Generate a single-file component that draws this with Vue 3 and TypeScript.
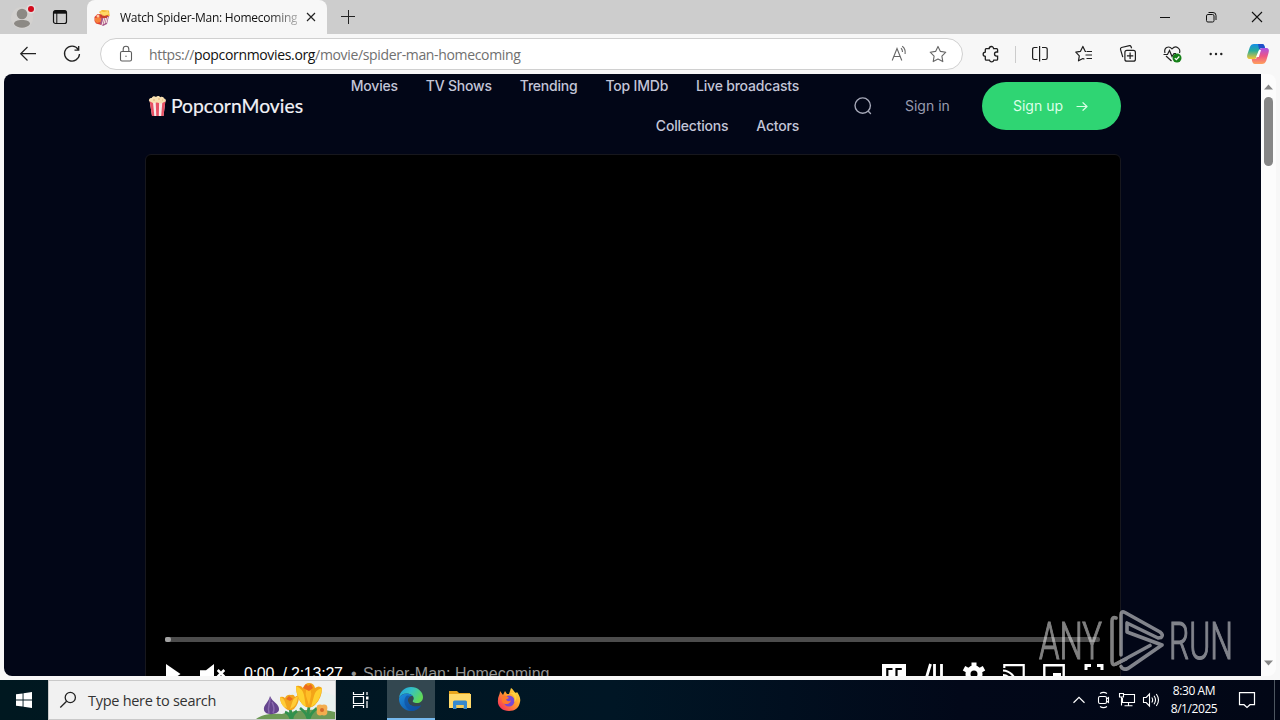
<script setup lang="ts">
const navRows: string[][] = [
  ['Movies', 'TV Shows', 'Trending', 'Top IMDb', 'Live broadcasts'],
  ['Collections', 'Actors'],
]
</script>

<template>
  <div class="desktop">
    <header class="tabbar">
      <div class="profile">
        <svg width="30" height="34" viewBox="0 0 30 34">
          <circle cx="14" cy="18" r="11" fill="#d3d1cf" />
          <circle cx="14" cy="14" r="5.3" fill="#8c8984" />
          <path d="M6 24c0-2.600 3.400-3.900 8-3.900s8 1.300 8 3.900c-1.700 2.600-4.800 3.700-8 3.700S7.700 26.600 6 24z" fill="#8c8984" />
          <circle cx="23" cy="9" r="4.500" fill="#e4dcdc" />
          <circle cx="23" cy="9" r="3" fill="#d20a1b" />
        </svg>
      </div>
      <svg class="workspaces" width="16" height="16" viewBox="0 0 16 16" fill="none" stroke="#111">
        <rect x="1.500" y="1.500" width="13" height="13" rx="2" stroke-width="1.200" />
        <path d="M2 3.200h12" stroke-width="3" />
        <path d="M4.800 4v10.500" />
      </svg>
      <div class="tab">
        <svg width="16" height="17" viewBox="0 0 16 17">
          <path d="M5 3l3-2 7 .5.700 5.500-3 2-5-3z" fill="#f5b52d" />
          <path d="M6 2l4 1 4-1 1 3-4 2-4-2z" fill="#ffd866" />
          <path d="M.5 8l3-3 4 .5 2 4.500-2 6-5.500-1.500L.5 12z" fill="#e0402f" />
          <path d="M1 9l4-1 3 2-1 3-4 1-2-2z" fill="#f6813b" />
          <path d="M8 7l7 0-2 8-4 2-3-2z" fill="#a8588c" />
          <path d="M9 8l1 1-2 7M12 8l-2 7M13.500 8l-1.500 6" stroke="#fff1e4" fill="none" />
          <path d="M5 5l5 2 4-1-1 3-5 0z" fill="#c83f2d" />
          <circle cx="4" cy="7" r="1.500" fill="#ffc9a1" />
        </svg>
        <span class="tab-title">Watch Spider-Man: Homecoming</span>
        <svg width="10" height="10" viewBox="0 0 10 10" stroke="#222" stroke-width="1.150"><path d="M1 1l8 8M9 1L1 9" /></svg>
      </div>
      <svg class="newtab" width="14" height="14" viewBox="0 0 14 14" stroke="#222"><path d="M0 6.500h14M7.500 0v14" /></svg>
      <div class="window-buttons">
        <svg width="12" height="12" viewBox="0 0 12 12" stroke="#111" fill="none"><path d="M1 6.500h10" /></svg>
        <svg width="12" height="12" viewBox="0 0 12 12" stroke="#111" fill="none"><rect x="1.500" y="3.500" width="7.500" height="7.500" rx="1.400" /><path d="M3.500 1.500h4.500a3 3 0 0 1 3 3V9" /></svg>
        <svg width="12" height="12" viewBox="0 0 12 12" stroke="#111" fill="none"><path d="M1 1l10 10M11 1L1 11" stroke-width="1.100" /></svg>
      </div>
    </header>

    <div class="toolbar">
      <div class="cell"><svg width="20" height="20" viewBox="0 0 20 20" fill="none" stroke="#222" stroke-width="1.200"><path d="M2.500 9.700H18M9.500 3L2.700 9.700l6.800 6.800" /></svg></div>
      <div class="cell"><svg width="20" height="20" viewBox="0 0 20 20" fill="none" stroke="#222" stroke-width="1.300"><path d="M16.200 5.300A7.500 7.500 0 1 0 17.500 10M16.700 2v4.200h-4.200" /></svg></div>
      <div class="address">
        <svg class="lock" width="14" height="18" viewBox="0 0 14 18" fill="none" stroke="#5c5c5c" stroke-width="1.100"><rect x="1.500" y="6.500" width="11" height="9.500" rx="1.500" /><path d="M4.200 6.500V4a2.800 2.800 0 0 1 5.600 0v2.500" /><circle cx="7" cy="11.200" r=".7" fill="#5c5c5c" stroke="none" /></svg>
        <span class="url">https://<b>popcornmovies.org</b>/movie/spider-man-homecoming</span>
        <svg class="aloud" width="18" height="18" viewBox="0 0 18 18" fill="none" stroke="#666" stroke-width="1.100"><path d="M1.200 15.500L6 3.500l4.800 12M2.800 11.500h6.400M10 3.200c1 1 1.500 2.200 1.500 3.700M11.200 1.300c2.200 1.500 3.400 4.200 2.900 7.700" /></svg>
        <svg class="star" width="18" height="18" viewBox="0 0 18 18" fill="none" stroke="#666" stroke-width="1.100" stroke-linejoin="round"><path d="M9 1.400l2.400 5 5.400.8-3.900 3.900.9 5.500L9 14l-4.800 2.600.9-5.500-3.900-3.900 5.400-.8z" /></svg>
      </div>
      <div class="cell puzzle"><svg width="20" height="20" viewBox="0 0 20 20" fill="none" stroke="#1e1e1e" stroke-width="1.300"><path d="M5.200 4.700h3a2.200 2.200 0 0 1 4.400 0h3q1 0 1 1V8h-1a2.100 2.100 0 0 0 0 4.200h1v3q0 1-1 1h-2.800a2.200 2.200 0 0 1-4.300 0H5.300q-1 0-1-1v-2.800a2.100 2.100 0 0 1 0-4.300V5.700q0-1 .9-1z" /></svg></div>
      <i class="divider"></i>
      <div class="cell"><svg width="20" height="20" viewBox="0 0 20 20" fill="none" stroke="#1e1e1e" stroke-width="1.200"><path d="M7.500 3.500H4.300a1.700 1.700 0 0 0-1.700 1.700v8.600a1.700 1.700 0 0 0 1.700 1.700h3.200M9.600 2v15.500M12 3.500h3.500a1.700 1.700 0 0 1 1.700 1.700v8.600a1.700 1.700 0 0 1-1.700 1.700H12" /></svg></div>
      <div class="cell"><svg width="20" height="20" viewBox="0 0 20 20" fill="none" stroke="#1e1e1e" stroke-width="1.200" stroke-linejoin="round"><path d="M12 7.500h-.7L8.900 2.400 6.500 7.300l-4.700.8 3.500 3.700-.8 5 4.400-2.300 1.500.8M12.500 7.500H18M11.500 11H18M12.500 14.500H18" /></svg></div>
      <div class="cell"><svg width="20" height="20" viewBox="0 0 20 20" fill="none" stroke="#1e1e1e" stroke-width="1.200"><rect x="6.900" y="6.400" width="10.500" height="10.800" rx="2" /><path d="M12.100 8.600v6.400M8.900 11.800h6.400M4.800 13.200L2.500 5.300a1.500 1.500 0 0 1 1-1.800l8-1.800q1-.2 1.500.8l.6 1.800" /></svg></div>
      <div class="cell heart"><svg width="22" height="20" viewBox="0 0 22 20" fill="none" stroke="#222" stroke-width="1.200"><path d="M4 9C2.500 4 7.500 1 11 4.800c4-4 9-.5 7.500 4.200M2.500 10.500h4l2-4 2.500 6 2-3h2M5 12l5.500 5" /><circle cx="16" cy="14" r="4.500" fill="#168018" stroke="none" /><path d="M13.800 14.200l1.500 1.500 3-3.200" stroke="#fff" /></svg></div>
      <div class="cell"><svg width="20" height="20" viewBox="0 0 20 20" fill="#222"><circle cx="4.700" cy="10" r="1.200" /><circle cx="10" cy="10" r="1.200" /><circle cx="15.300" cy="10" r="1.200" /></svg></div>
      <div class="cell copilot">
        <svg width="24" height="22" viewBox="0 0 24 22">
          <defs>
            <linearGradient id="copA" x1="0" y1="0" x2="0" y2="1"><stop stop-color="#158ee8" /><stop offset=".45" stop-color="#28ad9a" /><stop offset="1" stop-color="#f6c633" /></linearGradient>
            <linearGradient id="copB" x1="0" y1="0" x2="0" y2="1"><stop stop-color="#a754e6" /><stop offset=".5" stop-color="#ed5586" /><stop offset="1" stop-color="#ffa15c" /></linearGradient>
          </defs>
          <path d="M8 1h8c2 0 2.400 1.500 3 4h-3c-2 0-2.500 1-3 2.500l-2 6c-.6 2-1.700 2.500-3.500 2.500H3.800C1 16 .7 13.500 1.500 11L3.700 4.500C4.500 2 6 1 8 1z" fill="url(#copA)" />
          <path d="M12 1h4c2 0 2.400 1.500 3 4h-3c-1.500 0-2.300.5-2.800 1.800z" fill="#2050c9" />
          <path d="M16 21H9c-2 0-2.800-1.500-3.300-5H8c1.800 0 2.900-.5 3.500-2.500l2-6c.5-1.500 1-2.500 3-2.500h3.700c2.800 0 3.100 2.500 2.300 5l-2.200 7.500C19.500 20 18 21 16 21z" fill="url(#copB)" />
          <path d="M10 14l3-7h2l-2.200 7z" fill="#fff" />
        </svg>
      </div>
    </div>

    <main class="frame">
      <div class="page">
        <div class="container">
          <div class="site-header">
            <div class="brand">
              <svg width="19" height="22" viewBox="0 0 19 22">
                <path d="M1.500 5h16l-2 16H4z" fill="#f7e9e8" />
                <path d="M1.500 5h3.300l1.500 16H4zM7.600 5h3.600l-.4 16H8.300zM14.500 5h3l-2 16h-2.300z" fill="#e85064" />
                <path d="M1 6c-.5-2 1-3.500 2.700-3C4.500.6 7 .8 8 2c1.300-1.600 3.500-1 4.200.2C14.500 1 16 2.600 16 3.500c1.700 0 2.100 1.400 1.500 3L13 8.500 9 7.500 5 8z" fill="#f8dfb0" />
                <path d="M5 5h2m3-1h2m2 1h1" stroke="#dfb478" />
              </svg>
              <svg class="wordmark" width="134" height="26" viewBox="0 0 134 26"><text x="0" y="20" textLength="132" lengthAdjust="spacingAndGlyphs">PopcornMovies</text></svg>
            </div>
            <nav>
              <div v-for="(row, i) in navRows" :key="i" class="nav-row"><a v-for="item in row" :key="item">{{ item }}</a></div>
            </nav>
            <svg class="search-icon" width="20" height="20" viewBox="0 0 20 20" fill="none" stroke="#a5a7b7" stroke-width="1.400" stroke-linecap="round"><circle cx="9.700" cy="9.600" r="7.700" /><path d="M15.500 15.500l2 2" /></svg>
            <a class="signin">Sign in</a>
            <a class="signup"><span>Sign up</span><svg width="12" height="10" viewBox="0 0 12 10" fill="none" stroke="#d9ffe5" stroke-width="1.200" stroke-linecap="round" stroke-linejoin="round"><path d="M1 5.500h10M7 1.700l4 3.800-4 3.800" /></svg></a>
          </div>

          <section class="player">
            <div class="progress"><i></i></div>
            <div class="controls">
              <svg class="play" width="16" height="22" viewBox="0 0 16 22" fill="#fff"><path d="M1 1l14.500 10L1 21z" /></svg>
              <svg class="mute" width="28" height="22" viewBox="0 0 28 22" fill="#fff"><path d="M0 7.300h6L14 1v20l-8-6H0z" /><path d="M17.700 7l6.600 6.600M24.300 7l-6.600 6.600" stroke="#fff" stroke-width="2.600" /></svg>
              <span class="time">0:00 &nbsp;/ 2:13:27</span>
              <span class="bullet">•</span>
              <span class="movie">Spider-Man: Homecoming</span>
              <div class="player-icons">
                <svg width="24" height="22" viewBox="0 0 24 22"><path d="M0 1h24v20H0z" fill="#fff" /><path d="M10.500 6H5.300v9h5.200M19.800 6h-5.300v9h5.300" stroke="#000" fill="none" stroke-width="2.200" /></svg>
                <svg width="24" height="22" viewBox="0 0 24 22" stroke="#fff" stroke-width="2.800"><path d="M8.500 1L2.500 21M12.500 1v20M19.500 1v20" /></svg>
                <svg width="24" height="24" viewBox="0 0 24 24" fill="none" stroke="#fff"><circle cx="12" cy="12" r="6" stroke-width="5" /><path d="M12 .500v4m0 15v4M2 6.200l3.600 2M18.400 15.800l3.600 2M22 6.200l-3.600 2M5.600 15.800l-3.600 2" stroke-width="5" /></svg>
                <svg width="24" height="22" viewBox="0 0 24 22" fill="none" stroke="#fff" stroke-width="2.200"><path d="M2.300 5V2.200h19.400V20H15M1 7.500A13 13 0 0 1 13.500 20M1 12a8 8 0 0 1 8 8" /></svg>
                <svg width="24" height="22" viewBox="0 0 24 22" fill="none" stroke="#fff" stroke-width="2.400"><path d="M2.300 2.300h19.400V20H2.300z" /><path d="M11 10h8v6h-8z" fill="#fff" stroke="none" /></svg>
                <svg width="24" height="22" viewBox="0 0 24 22" fill="none" stroke="#fff" stroke-width="3"><path d="M4 7V2.500h5M15 2.500h5V7M4 14v5.500h5M20 14v5.500h-5" /></svg>
              </div>
            </div>
          </section>
        </div>
      </div>
      <aside class="scrollbar">
        <svg width="9" height="6" viewBox="0 0 9 6"><path d="M0 5.500L4.500.5 9 5.500z" fill="#868686" /></svg>
        <i></i>
        <svg class="down" width="9" height="6" viewBox="0 0 9 6"><path d="M0 .5L4.500 5.500 9 .5z" fill="#868686" /></svg>
      </aside>
    </main>

    <footer class="taskbar">
      <div class="start"><svg width="16" height="16" viewBox="0 0 16 16" fill="#fff"><path d="M0 2.300L6.600 1.400V7.500H0zM7.500 1.200L16 0v7.500H7.500zM0 8.400h6.600v6.200L0 13.700zM7.500 8.400H16V16l-8.500-1.200z" /></svg></div>
      <div class="search">
        <svg width="18" height="18" viewBox="0 0 18 18" fill="none" stroke="#222" stroke-width="1.300"><circle cx="11.300" cy="6.500" r="5.100" /><path d="M7.600 10.200L1.300 16.500" /></svg>
        <span>Type here to search</span>
        <svg class="flowers" width="79" height="38" viewBox="0 0 79 38">
          <path d="M30 38l5-26 18-7 26 10v23z" fill="#e2f3f0" opacity=".5" />
          <path d="M0 38c6-5 16-6 26-5 14-4 38-6 53-2v7z" fill="#6d9a56" />
          <path d="M14 15c2 6 10 8 9 14-1 5-14 6-15 0-1-5 5-8 6-14z" fill="#65458e" />
          <path d="M14 17c0 6-3 9-1 15M16 21c2 4 3 7 1 11" stroke="#8a6aaf" stroke-width="1.500" fill="none" />
          <path d="M34 28c1 4 2 7 1 10M53 26c-1 4-1 8 0 12M61 27c-5 4-7 7-8 11M44 27c4 3 7 6 8 11M29 31c3 1 5 4 6 7M41 30c-3 2-5 5-5 8" stroke="#31914d" stroke-width="2.800" fill="none" />
          <path d="M24 16q3-1 5 1 2-4 6-3 3-1 4 2 2-2 4-1 0 8-5 13-5 3-9-1-5-5-5-11z" fill="#f2a51d" />
          <path d="M24 16q4 1 5 5l2 6-3-1q-4-4-4-10zM42 15q-5 2-6 7l-2 6q7-2 8-13z" fill="#ffcc38" />
          <path d="M40 5q5-1 7 2 2-5 6-5 5 0 6 5 4-3 7 0 0 10-7 17-6 5-12 0-7-7-7-19z" fill="#f3a418" />
          <path d="M40 5q7 3 8 9l2 12q-9-5-10-21zM66 7q-7 2-8 8l-3 11q9-4 11-19z" fill="#ffd02e" />
          <path d="M52 5q4 5 3 10l-2 9-3-9q-1-5 2-10z" fill="#ffbe26" />
          <path d="M47 7l3-4 2 2 3-2 2 4-4 3zM30 18l3-3 4 3-3 2z" fill="#ec6b1f" />
          <g fill="#f3ad4e"><circle cx="64" cy="27" r="3.400" /><circle cx="68" cy="27" r="3.400" /><circle cx="64" cy="31" r="3.400" /><circle cx="68" cy="31" r="3.400" /></g>
          <circle cx="66" cy="29" r="2" fill="#d46a28" />
        </svg>
      </div>
      <div class="task view"><svg width="18" height="18" viewBox="0 0 18 18" fill="none" stroke="#fff" stroke-width="1.200"><path d="M1.500 1v2.500h10V1M1.500 17v-2.500h10V17M1.500 5.500h10v7h-10zM15 1v3M15 10v7" /><path d="M14 5.500h2.500v3H14z" fill="#fff" stroke="none" /></svg></div>
      <div class="task active">
        <svg width="26" height="26" viewBox="0 0 26 26">
          <defs>
            <linearGradient id="edgeTop" x1="0" y1="0" x2="1" y2=".5"><stop stop-color="#1d9ee0" /><stop offset=".5" stop-color="#35c1c4" /><stop offset="1" stop-color="#60d957" /></linearGradient>
            <linearGradient id="edgeLow" x1="0" y1="0" x2="1" y2="1"><stop stop-color="#1c8edf" /><stop offset="1" stop-color="#0d4b9c" /></linearGradient>
          </defs>
          <path d="M1 12C2 5 7 1 13 1c7 0 12 5 12 10 0 4-3 6-6 6-3 0-5-1-4-2.500 2.500-3-1-7-6-7-4 0-7 2-8 4.500z" fill="url(#edgeTop)" />
          <path d="M1 13c0-3 4-5.500 8-5.500 2.500 0 4.500 1 5.500 2.500-3 0-5 2-4.500 5 .7 4.500 6 7 13 4.500C21 23 17 25 13 25 6 25 1 19 1 13z" fill="url(#edgeLow)" />
          <path d="M9 9.500C5 12 5 21 13 25c4 .1 8-2 10-5.500-7 2.500-12.300 0-13-4.500-.3-2 .5-4 3-5z" fill="#104f9f" opacity=".65" />
        </svg>
      </div>
      <div class="task"><svg width="22" height="20" viewBox="0 0 22 20"><path d="M0 1h8l2 2h11v15H0z" fill="#e8a51d" /><path d="M0 4h22v14H0z" fill="#ffd96a" /><path d="M4 12q0-1.500 1.500-1.500h11Q18 10.500 18 12v7h-3.500v-4h-7v4H4z" fill="#3589ce" /><path d="M7.500 15h7v3h-7z" fill="#f3ca59" /></svg></div>
      <div class="task">
        <svg width="24" height="24" viewBox="0 0 24 24">
          <defs><linearGradient id="fox" x1="1" y1="0" x2="0" y2="1"><stop stop-color="#fff044" /><stop offset=".45" stop-color="#ff9b2c" /><stop offset="1" stop-color="#f51b65" /></linearGradient></defs>
          <path d="M3 3l3 4 2-4 2 3 2 0 2-6c2 1 3 4 5 5l1-1c2 3 4 6 3 10-1 6-5 9-11 9C5 23 0 18 1 12c0-4 2-5 2-9z" fill="url(#fox)" />
          <circle cx="12" cy="13" r="5.500" fill="#7748d3" />
          <path d="M5 8c3-1 5 0 7 2l-3 1.500c1 2 3 2 5 1-1 4-7 5-9 1z" fill="#ff7a2b" />
          <path d="M12 5c5 1 7 5 5 9 3-2 3-6 1-9z" fill="#ffd23c" />
        </svg>
      </div>
      <div class="tray">
        <svg width="14" height="8" viewBox="0 0 14 8" fill="none" stroke="#fff" stroke-width="1.200"><path d="M1.500 6.700L7 1.300l5.500 5.400" /></svg>
        <svg class="meet" width="14" height="18" viewBox="0 0 14 18" fill="none" stroke="#fff" stroke-width="1.100"><rect x="1.500" y="5.500" width="8" height="7" rx="1.500" /><path d="M9.500 8l2-1.500v5l-2-1.500M3 2.500Q6.500.3 10 2.500M3 15.500q3.500 2.200 7 0" /></svg>
        <svg class="net" width="18" height="16" viewBox="0 0 18 16" fill="none" stroke="#fff" stroke-width="1.100"><path d="M6 2.500h10.500v8H4.500V6M10.500 10.500v3M6.500 13.700h8" /><path d="M1.500 1.500h4v3.500h-4zM3.500 5v8.500" /></svg>
        <svg class="sound" width="18" height="16" viewBox="0 0 18 16" fill="none" stroke="#fff" stroke-width="1.100"><path d="M1.500 5.500h2.700L7.500 2v12l-3.300-3.500H1.500zM9.800 5.500q1.700 2.500 0 5M12 3.700q3 4.300 0 8.600M14.300 2q4.400 6 0 12" /></svg>
        <div class="clock"><span>8:30 AM</span><span>8/1/2025</span></div>
        <svg class="notice" width="18" height="18" viewBox="0 0 18 18" fill="none" stroke="#fff" stroke-width="1.200"><path d="M1.500 1.700h15v12H12l-3 2.800-3-2.800H1.500z" /></svg>
        <i></i>
      </div>
    </footer>

    <svg class="watermark" width="196" height="66" viewBox="0 0 196 66">
      <g class="mark-text"><text x="3" y="51" textLength="63" lengthAdjust="spacingAndGlyphs">ANY</text><text x="133" y="51" textLength="64" lengthAdjust="spacingAndGlyphs">RUN</text></g>
      <g fill="none" stroke="#fff" stroke-linejoin="round" stroke-linecap="round" stroke-width="3.600">
        <path d="M80 10q-4-1.500-4 3v40q0 5 4 3l34-18.500M85 47V7q0-4.500 4-2.500l35 19.500q4 3 1 5.500l-3 .5L91 15v9l35 13-34 23.500q-5 2-7-2" />
        <path d="M80 56l10-5" />
      </g>
    </svg>
  </div>
</template>

<style>
html, body { margin: 0; overflow: hidden; }
</style>
<style scoped>
* { box-sizing: border-box; }
svg { display: block; flex: none; }
.desktop { position: relative; width: 1280px; height: 720px; overflow: hidden; display: flex; flex-direction: column; background: #f7f7f7; font-family: "Open Sans", "Noto Sans", sans-serif; white-space: nowrap; }
.tabbar { height: 34px; flex: none; display: flex; background: #cdcdcd; }
.profile { width: 52px; padding-left: 8px; }
.workspaces { margin: 9px 19px 0 0; }
.tab { width: 240px; height: 34px; border-radius: 8px 8px 0 0; background: #f7f7f7; display: flex; align-items: center; padding-left: 7px; }
.tab-title { width: 177px; margin: 0 9px 0 10px; font-size: 12px; letter-spacing: -.24px; color: #111; mask-image: linear-gradient(90deg, #000 84%, rgba(0,0,0,.3)); }
.newtab { margin: 10px 0 0 14px; }
.window-buttons { margin: 11px 17px 0 auto; display: flex; gap: 34px; }
.toolbar { height: 40px; flex: none; padding-left: 6px; display: flex; align-items: center; }
.cell { width: 44px; height: 40px; flex: none; display: flex; align-items: center; justify-content: center; }
.address { width: 863px; height: 32px; margin-left: 6px; flex: none; border: 1px solid #d0d0d0; border-radius: 16px; background: #fff; display: flex; align-items: center; }
.lock { margin-left: 18px; }
.url { margin-left: 16px; font-size: 14px; letter-spacing: -.34px; color: #707070; }
.url b { color: #111; font-weight: 400; }
.aloud { margin-left: auto; }
.star { margin: 0 15px 0 20px; }
.puzzle { margin-left: 6px; }
.divider { width: 1px; height: 17px; margin: 0 2px; background: #ccc; flex: none; }
.copilot { margin-left: -2px; }
.frame { height: 606px; flex: none; padding: 0 4px 4px; display: flex; }
.page { width: 1257px; height: 602px; overflow: hidden; border-radius: 8px 0 0 8px; background: #020617; padding-left: 141px; }
.container { width: 976px; }
.site-header { height: 80px; display: flex; align-items: center; font-family: Inter, sans-serif; font-size: 14px; padding-bottom: 16px; }
.brand { width: 160px; display: flex; align-items: center; padding-left: 3px; gap: 4px; }
.wordmark { font-family: Lato, sans-serif; font-size: 20px; fill: #f2f2f7; overflow: visible; stroke: #f2f2f7; stroke-width: .2px; }
nav { width: 494px; }
.nav-row { display: flex; gap: 28px; height: 40px; align-items: center; justify-content: flex-end; color: #c3c5d7; font-weight: 500; letter-spacing: -.21px; padding-bottom: 2px; }
.search-icon { margin-left: 54px; }
.signin { margin-left: 32px; color: #989baf; width: 45px; padding-bottom: 2px; }
.signup { margin-left: auto; width: 139px; height: 48px; border-radius: 24px; background: #2fd573; color: #dcffe8; display: flex; align-items: center; padding-left: 31px; }
.signup span { width: 63px; padding-bottom: 2px; }
.player { height: 540px; background: #000; border: 1px solid #17171d; border-radius: 6px; padding: 482px 16px 0 19px; font-family: "Liberation Sans", sans-serif; }
.progress { height: 5px; margin-right: 4px; background: #4c4c4c; border-radius: 2px; }
.progress i { display: block; width: 6px; height: 5px; background: #a2a2a2; border-radius: 2px; }
.controls { display: flex; align-items: center; height: 64px; font-size: 16px; }
.mute { margin-left: 19px; }
.time { color: #fff; width: 99px; margin-left: 16px; letter-spacing: -.24px; }
.bullet { color: #929292; margin-left: 8px; width: 12px; }
.movie { color: #929292; letter-spacing: .03px; }
.player-icons { margin: 0 -2px 0 auto; display: flex; align-items: center; gap: 16px; }
.scrollbar { width: 15px; height: 602px; flex: none; background: #fcfcfc; border-radius: 0 8px 8px 0; display: flex; flex-direction: column; align-items: center; padding-top: 10px; }
.scrollbar i { width: 9px; height: 69px; border-radius: 5px; background: #868686; margin-top: 7px; }
.scrollbar .down { margin: auto 0 10px; }
.taskbar { height: 40px; flex: none; background: linear-gradient(90deg, #001820, #001625 48%, #020819 75%, #020716); display: flex; }
.start { width: 48px; display: grid; place-items: center; }
.search { width: 288px; border: 1px solid #c9c9c9; background: #f1f1f1; display: flex; align-items: center; padding-left: 10px; color: #333; font-size: 14.500px; }
.search span { margin-left: 11px; width: 128px; letter-spacing: -.28px; }
.flowers { margin-left: auto; }
.task { width: 49px; display: grid; place-items: center; }
.task.view { margin-right: 2px; }
.task.active { width: 48px; background: #334750; border-bottom: 2px solid #76b9ed; }
.tray { margin-left: auto; display: flex; align-items: center; color: #fff; width: 208px; }
.meet { margin-left: 11px; }
.net { margin-left: 7px; }
.sound { margin-left: 6px; }
.clock { width: 52px; margin-left: 8px; text-align: center; font-size: 12px; line-height: 18px; display: flex; flex-direction: column; letter-spacing: -.42px; }
.notice { margin-left: 18px; }
.tray i { width: 1px; height: 40px; margin-left: auto; margin-right: 5px; background: #4d5660; }
.watermark { position: absolute; left: 1036px; top: 608px; opacity: .5; overflow: visible; }
.mark-text { fill: #fff; stroke: #fff; stroke-width: 1.200px; font-family: Roboto, sans-serif; font-size: 51px; font-weight: 300; }
</style>
